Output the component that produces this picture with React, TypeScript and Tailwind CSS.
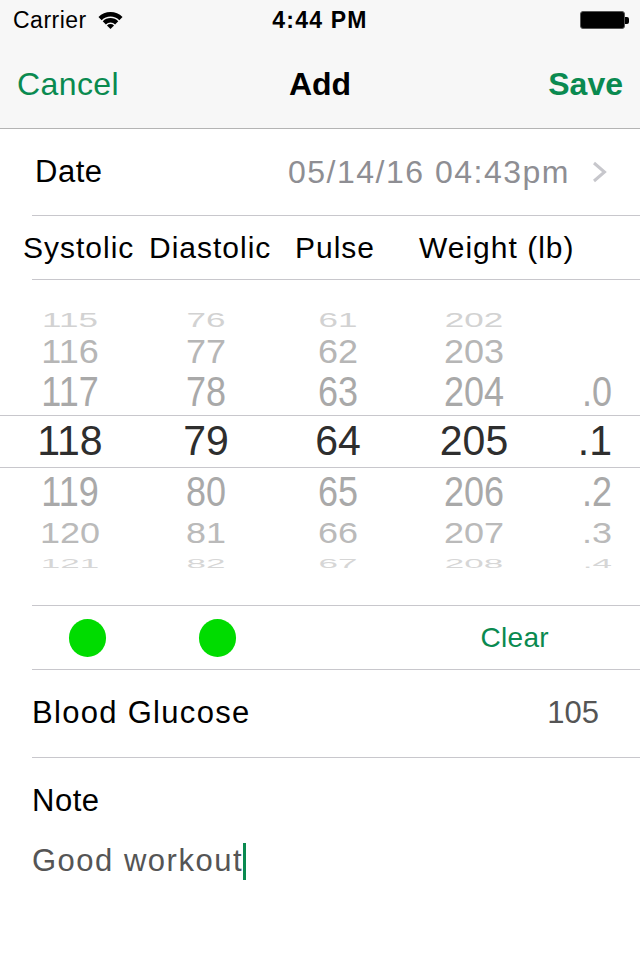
import React from "react";

const F = { fontFamily: '"Liberation Sans", Arial, sans-serif' };

type Row = {
  h: string;
  cells: string[];
  scale: string;
  color: string;
  size: string;
};

function PickerRow({ h, cells, scale, color, size }: Row) {
  const widths = ["w-[140px]", "w-[132px]", "w-[132px]", "w-[140px]", "w-[96px]"];
  return (
    <div className={`flex ${h} items-center`}>
      {cells.map((c, i) => (
        <div
          key={i}
          className={`${widths[i]} flex h-full items-center ${i === 4 ? "justify-end pr-[28px]" : "justify-center"}`}
        >
          <span className={`inline-block leading-none ${scale} ${color} ${size}`}>{c}</span>
        </div>
      ))}
    </div>
  );
}

export default function App() {
  return (
    <div className="w-[640px] h-[960px] bg-white overflow-hidden" style={F}>
      {/* Header */}
      <div className="bg-[#f7f7f7] border-b border-[#b4b4b4]">
        <div className="flex h-[40px] items-center relative">
          <span className="ml-[13px] text-[23px] tracking-[0.5px] text-black">Carrier</span>
          <svg className="ml-[11px]" width="25" height="17" viewBox="-0.5 0 25 17">
            <path d="M -0.02 4.98 A 17 17 0 0 1 24.02 4.98 L 20.84 8.16 A 12.5 12.5 0 0 0 3.16 8.16 Z" fill="#000" />
            <path d="M 4.22 9.22 A 11 11 0 0 1 19.78 9.22 L 16.6 12.4 A 6.5 6.5 0 0 0 7.4 12.4 Z" fill="#000" />
            <path d="M 8.46 13.46 A 5 5 0 0 1 15.54 13.46 L 12 17 Z" fill="#000" />
          </svg>
          <span className="absolute left-0 right-0 text-center text-[23px] font-bold tracking-[1.2px] text-black pointer-events-none">
            4:44 PM
          </span>
          <div className="ml-auto mr-[11px] flex items-center">
            <div className="w-[45px] h-[18px] rounded-[3px] border border-[#555] bg-black p-[1px]">
              <div className="w-full h-full rounded-[2px] bg-black" />
            </div>
            <div className="w-[4px] h-[7px] rounded-r-[2px] bg-black" />
          </div>
        </div>
        <div className="flex h-[88px] items-center relative">
          <span className="ml-[17px] text-[32px] tracking-[0.4px] text-[#0a8a50]">Cancel</span>
          <span className="absolute left-0 right-0 text-center text-[32px] font-bold text-black pointer-events-none">
            Add
          </span>
          <span className="ml-auto mr-[17px] text-[32px] font-bold text-[#0a8a50]">Save</span>
        </div>
      </div>

      {/* Date row */}
      <div className="flex h-[86px] items-center">
        <span className="ml-[35px] text-[31px] tracking-[0.5px] text-black">Date</span>
        <span className="ml-auto text-[32px] tracking-[1.5px] text-[#8e8e93]">05/14/16 04:43pm</span>
        <svg className="ml-[22px] mr-[33px]" width="15" height="22" viewBox="0 0 15 22">
          <polyline points="2,2 12.5,11 2,20" fill="none" stroke="#c7c7cc" strokeWidth="3" />
        </svg>
      </div>
      <div className="ml-[32px] h-px bg-[#c8c7cc]" />

      {/* Column labels */}
      <div className="flex h-[63px] items-center text-[30px] tracking-[1px] text-black">
        <span className="ml-[23px] w-[126px]">Systolic</span>
        <span className="w-[146px]">Diastolic</span>
        <span className="w-[124px]">Pulse</span>
        <span>Weight (lb)</span>
      </div>
      <div className="ml-[32px] h-px bg-[#c8c7cc]" />

      {/* Picker */}
      <div className="h-[325px] pt-[25px]">
        <PickerRow h="h-[29px]" cells={["115", "76", "61", "202", ""]} scale="scale-y-[0.58]" color="text-[#d2d2d2]" size="text-[35px]" />
        <PickerRow h="h-[35px]" cells={["116", "77", "62", "203", ""]} scale="scale-y-[0.93]" color="text-[#b6b6b6]" size="text-[36px]" />
        <PickerRow h="h-[46px]" cells={["117", "78", "63", "204", ".0"]} scale="scale-y-[1.16]" color="text-[#a9a9a9]" size="text-[36px]" />
        <div className="border-y border-[#c8c7cc]">
          <PickerRow h="h-[51px]" cells={["118", "79", "64", "205", ".1"]} scale="scale-y-[1.03]" color="text-[#2e2e2e]" size="text-[41px]" />
        </div>
        <PickerRow h="h-[48px]" cells={["119", "80", "65", "206", ".2"]} scale="scale-y-[1.16]" color="text-[#a9a9a9]" size="text-[36px]" />
        <PickerRow h="h-[34px]" cells={["120", "81", "66", "207", ".3"]} scale="scale-y-[0.82]" color="text-[#bababa]" size="text-[36px]" />
        <PickerRow h="h-[27px]" cells={["121", "82", "67", "208", ".4"]} scale="scale-y-[0.36]" color="text-[#d6d6d6]" size="text-[35px]" />
      </div>
      <div className="ml-[32px] h-px bg-[#c8c7cc]" />

      {/* Dots row */}
      <div className="flex h-[63px] items-center">
        <div className="ml-[69px] w-[37px] h-[38px] rounded-full bg-[#00dc00]" />
        <div className="ml-[93px] w-[37px] h-[38px] rounded-full bg-[#00dc00]" />
        <span className="ml-auto mr-[91px] text-[28px] tracking-[0.3px] text-[#0a8a50]">Clear</span>
      </div>
      <div className="ml-[32px] h-px bg-[#c8c7cc]" />

      {/* Blood glucose */}
      <div className="flex h-[87px] items-center">
        <span className="ml-[32px] text-[31px] tracking-[1.3px] text-black">Blood Glucose</span>
        <span className="ml-auto mr-[41px] text-[31px] text-[#555555]">105</span>
      </div>
      <div className="ml-[32px] h-px bg-[#c8c7cc]" />

      {/* Note */}
      <div className="pl-[32px] pt-[25px]">
        <div className="h-[36px] leading-[36px] text-[31px] tracking-[0.5px] text-black">Note</div>
        <div className="mt-[24px] flex h-[37px] items-center text-[31px] tracking-[1.5px] text-[#555555]">
          <span>Good workout</span>
          <span className="inline-block w-[3px] h-[37px] bg-[#0a8a50]" />
        </div>
      </div>
    </div>
  );
}
